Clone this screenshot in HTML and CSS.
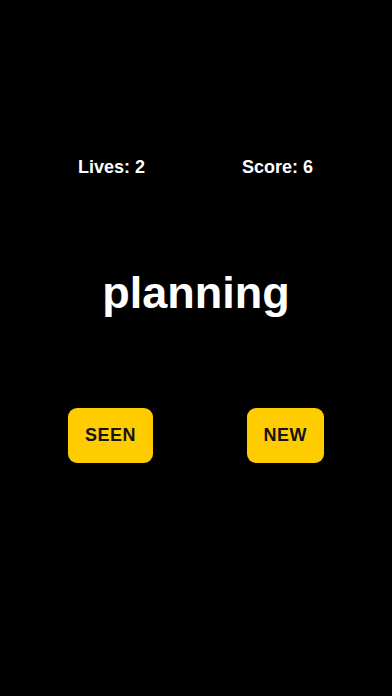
FILE: index.html
```html
<!DOCTYPE html>
<html lang="en">
<head>
<meta charset="utf-8">
<title>Seen or New</title>
<link rel="stylesheet" href="styles.css">
</head>
<body>
<main class="app">
  <div class="stats">
    <span class="stat">Lives: 2</span>
    <span class="stat">Score: 6</span>
  </div>
  <h1 class="word">planning</h1>
  <div class="actions">
    <button class="btn">SEEN</button>
    <button class="btn">NEW</button>
  </div>
</main>
</body>
</html>
```

FILE: styles.css
```css
html, body {
  margin: 0;
  padding: 0;
  background: #000;
}
body {
  font-family: "Liberation Sans", Arial, sans-serif;
  color: #fff;
}
.app {
  width: 392px;
  height: 696px;
  box-sizing: border-box;
  padding-top: 157px;
  display: flex;
  flex-direction: column;
}
.stats {
  display: flex;
  justify-content: space-between;
  padding: 0 79px 0 78px;
  font-size: 18px;
  line-height: 21px;
  font-weight: 700;
}
.word {
  margin: 89px 0 0;
  text-align: center;
  font-size: 45px;
  line-height: 52px;
  font-weight: 700;
}
.actions {
  display: flex;
  justify-content: space-between;
  padding: 0 68px;
  margin-top: 89px;
}
.btn {
  border: 0;
  background: #ffcc00;
  color: #141414;
  font-family: "Liberation Sans", Arial, sans-serif;
  font-size: 18px;
  line-height: 21px;
  font-weight: 700;
  letter-spacing: 0.5px;
  padding: 17px 17px;
  border-radius: 9px;
}
```
